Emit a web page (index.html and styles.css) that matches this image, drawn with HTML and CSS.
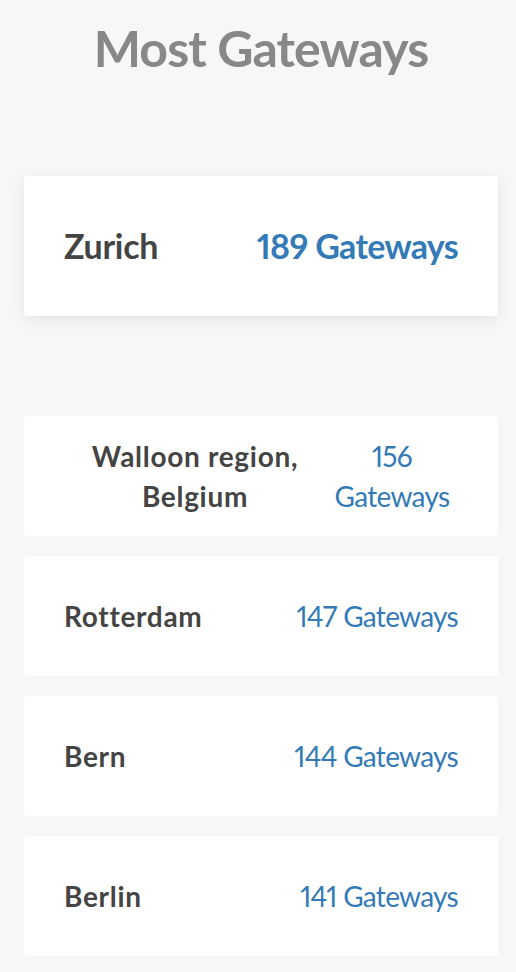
FILE: index.html
```html
<!DOCTYPE html>
<html>

<head>
    <meta charset="utf-8" />
    <title>Most Gateways</title>
    <link rel="stylesheet" href="styles.css">
</head>

<body>
    <div class="page">
        <h1 class="title">Most Gateways</h1>
        <div class="card card-top">
            <div class="place">Zurich</div>
            <div class="count">189 Gateways</div>
        </div>
        <div class="ranking">
            <div class="card">
                <div class="place">Walloon region, Belgium</div>
                <div class="count">156 Gateways</div>
            </div>
            <div class="card">
                <div class="place">Rotterdam</div>
                <div class="count">147 Gateways</div>
            </div>
            <div class="card">
                <div class="place">Bern</div>
                <div class="count">144 Gateways</div>
            </div>
            <div class="card">
                <div class="place">Berlin</div>
                <div class="count">141 Gateways</div>
            </div>
        </div>
    </div>
</body>

</html>
```

FILE: styles.css
```css
body {
    margin: 0;
    background-color: #f7f7f7;
    font-family: Lato, "Open Sans", sans-serif;
    font-variant-numeric: proportional-nums;
    line-height: 1.42857143;
}

.page {
    padding: 0 18px 0 24px;
}

.title {
    margin: 21px 0 100px;
    font-size: 50px;
    line-height: 1.1;
    font-weight: 700;
    color: #888888;
    text-align: center;
    letter-spacing: -0.9px;
}

.card {
    display: flex;
    align-items: center;
    justify-content: space-between;
    height: 120px;
    padding: 0 40px;
    background-color: #ffffff;
    border-radius: 4px;
    font-size: 28px;
    text-align: center;
}

.card-top {
    height: 140px;
    margin-bottom: 100px;
    font-size: 34px;
    box-shadow: 0 4px 16px rgba(0, 0, 0, 0.08);
}

.place {
    font-weight: 700;
    color: #444444;
    letter-spacing: 0.7px;
}

.card-top .place {
    letter-spacing: -0.3px;
}

.count {
    color: #337ab7;
    letter-spacing: -0.7px;
}

.card-top .count {
    font-weight: 700;
}

.ranking {
    display: flex;
    flex-direction: column;
    gap: 20px;
}
```
